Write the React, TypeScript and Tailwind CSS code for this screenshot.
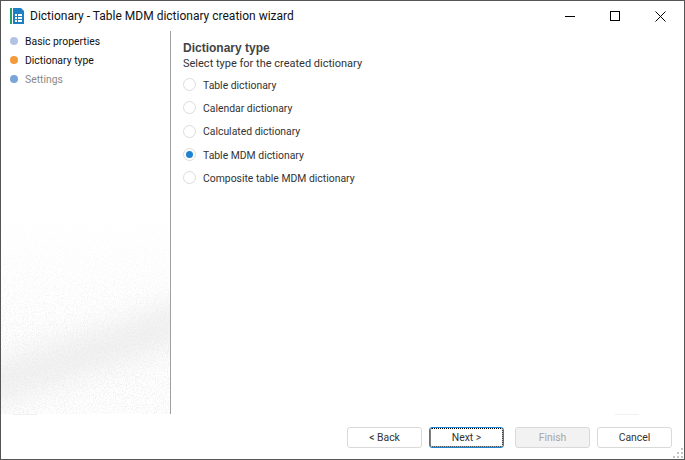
const steps = [
  { label: "Basic properties", dot: "bg-[#b4c3e1]", text: "text-[#111111]" },
  { label: "Dictionary type", dot: "bg-[#f39a3c]", text: "text-[#111111]" },
  { label: "Settings", dot: "bg-[#7aa5d8]", text: "text-[#8a8a8a]" },
]

const options = [
  { label: "Table dictionary", checked: false },
  { label: "Calendar dictionary", checked: false },
  { label: "Calculated dictionary", checked: false },
  { label: "Table MDM dictionary", checked: true },
  { label: "Composite table MDM dictionary", checked: false },
]

function AppIcon() {
  return (
    <svg width="14" height="16" viewBox="0 0 14 16" className="shrink-0">
      <rect x="0" y="0" width="2" height="16" fill="#22a366" />
      <path d="M3 0h8l3 3v13H3z" fill="#1f7fc4" />
      <g fill="#ffffff">
        <rect x="5" y="6" width="2" height="2" />
        <rect x="8" y="6" width="4" height="2" />
        <rect x="5" y="9" width="2" height="2" />
        <rect x="8" y="9" width="4" height="2" />
        <rect x="5" y="12" width="2" height="2" />
        <rect x="8" y="12" width="4" height="2" />
      </g>
    </svg>
  )
}

function WindowButtons() {
  return (
    <div className="flex items-center gap-[35px] pr-[18px]">
      <svg width="10" height="10" viewBox="0 0 10 10">
        <path d="M0 5.5h10" stroke="#000" fill="none" />
      </svg>
      <svg width="10" height="10" viewBox="0 0 10 10">
        <rect x="0.5" y="0.5" width="9" height="9" stroke="#000" fill="none" />
      </svg>
      <svg width="11" height="11" viewBox="0 0 11 11">
        <path d="M0.5 0.5l10 10M10.5 0.5l-10 10" stroke="#000" fill="none" />
      </svg>
    </div>
  )
}

// grainy watermark behind the steps list
function PanelTexture() {
  return (
    <svg width="169" height="383" className="absolute left-0 top-0">
      <defs>
        <filter id="grain" x="0" y="0" width="100%" height="100%">
          <feTurbulence type="fractalNoise" baseFrequency="0.9" numOctaves="2" seed="4" />
          <feColorMatrix values="0 0 0 0 0.78 0 0 0 0 0.78 0 0 0 0 0.78 0 0 0 3.4 -1.5" />
        </filter>
        <filter id="soft" x="-30%" y="-100%" width="160%" height="300%">
          <feGaussianBlur stdDeviation="15" />
        </filter>
        <linearGradient id="fade" x1="0" y1="0" x2="0" y2="1">
          <stop offset="0.45" stopColor="#000" />
          <stop offset="0.8" stopColor="#888" />
          <stop offset="1" stopColor="#888" />
        </linearGradient>
        <mask id="fadeMask">
          <rect width="169" height="383" fill="url(#fade)" />
        </mask>
      </defs>
      <path d="M-20 362 C 40 330 100 325 190 285" stroke="#eeeeee" strokeWidth="34" fill="none" filter="url(#soft)" />
      <rect width="169" height="383" filter="url(#grain)" mask="url(#fadeMask)" />
    </svg>
  )
}

function Radio({ checked }: { checked: boolean }) {
  return (
    <span className="flex h-[13px] w-[13px] shrink-0 items-center justify-center rounded-full border border-[#dcdcdc] bg-white">
      {checked && <span className="h-[7px] w-[7px] rounded-full bg-[#1f84d0]" />}
    </span>
  )
}

function WizardButton({
  label,
  className,
}: {
  label: string
  className: string
}) {
  return (
    <div
      className={`flex h-[21px] w-[75px] items-center justify-center rounded-[3px] border ${className}`}
    >
      {label}
    </div>
  )
}

export default function App() {
  return (
    <div className="flex h-[460px] w-[685px] flex-col overflow-hidden border border-[#555555] bg-white font-['Roboto',sans-serif] text-[10.4px]">
      <div className="flex h-[30px] shrink-0 items-center justify-between pl-[9px]">
        <div className="flex items-center gap-[6px]">
          <AppIcon />
          <span className="text-[12px] text-[#111111]">
            Dictionary - Table MDM dictionary creation wizard
          </span>
        </div>
        <WindowButtons />
      </div>

      <div className="flex min-h-0 flex-1">
        <div className="relative flex h-[383px] w-[170px] shrink-0 flex-col gap-[3px] border-r border-[#a0a0a0] pl-[9px] pt-[2px]">
          <PanelTexture />
          {steps.map((step) => (
            <div key={step.label} className="relative flex h-[16px] items-center gap-[7px]">
              <span className={`h-[8px] w-[8px] rounded-full ${step.dot}`} />
              <span className={`pt-[2px] ${step.text}`}>{step.label}</span>
            </div>
          ))}
        </div>

        <div className="flex-1 pl-[12px] pt-[10px] text-[#333333]">
          <div className="font-['Liberation_Sans',sans-serif] text-[12px] font-bold leading-[15px] text-[#444444]">
            Dictionary type
          </div>
          <div className="text-[11px] leading-[16px]">Select type for the created dictionary</div>
          <div className="mt-[1px] flex flex-col">
            {options.map((option) => (
              <div key={option.label} className="flex h-[23.25px] items-center gap-[7px]">
                <Radio checked={option.checked} />
                <span className="pt-[2px]">{option.label}</span>
              </div>
            ))}
          </div>
        </div>
      </div>

      <div className="relative flex h-[45px] shrink-0 items-start justify-end gap-[7px] pr-[12px] pt-[13px] text-[#333333]">
        <span className="absolute left-[12px] top-0 h-px w-[24px] bg-[#f0f0f0]" />
        <span className="absolute left-[614px] top-0 h-px w-[24px] bg-[#f0f0f0]" />
        <WizardButton label="< Back" className="border-[#d9d9d9] bg-white" />
        <WizardButton
          label="Next >"
          className="mr-[4px] border-[#1f84d0] bg-white outline-1 outline-offset-[-2px] outline-dotted outline-black"
        />
        <WizardButton
          label="Finish"
          className="border-[#d9d9d9] bg-[#f2f2f2] text-[#a6a6a6]"
        />
        <WizardButton label="Cancel" className="border-[#d9d9d9] bg-white" />
        <svg width="11" height="11" viewBox="0 0 11 11" className="absolute bottom-0 right-0">
          <g fill="#c4c4c4">
            <rect x="8" y="0" width="2" height="2" />
            <rect x="4" y="4" width="2" height="2" />
            <rect x="8" y="4" width="2" height="2" />
            <rect x="0" y="8" width="2" height="2" />
            <rect x="4" y="8" width="2" height="2" />
            <rect x="8" y="8" width="2" height="2" />
          </g>
        </svg>
      </div>
    </div>
  )
}
